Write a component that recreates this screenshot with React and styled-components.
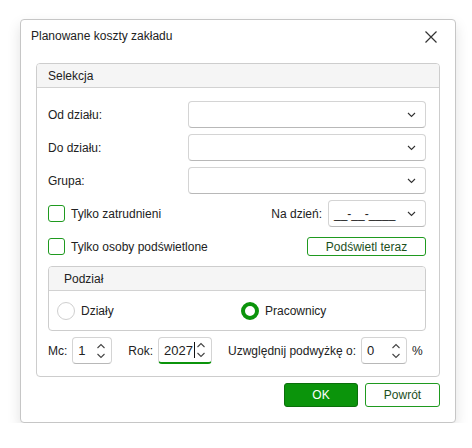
import React from "react";
import styled, { createGlobalStyle } from "styled-components";

const GlobalStyle = createGlobalStyle`
  html, body { margin: 0; padding: 0; background: #ffffff; }
  body { font-family: "Liberation Sans", Arial, sans-serif; font-size: 12px; color: #222; }
  * { box-sizing: border-box; }
`;

const green = "#0b940b";
const greenBorder = "#1f9a1f";
const darkGreenText = "#1c4f1c";

const Page = styled.div`
  padding: 19px 0 0 20px;
`;

const Dialog = styled.div`
  width: 436px;
  border: 1px solid #c6c6c6;
  border-radius: 4px;
  background: #fff;
  box-shadow: 0 6px 14px rgba(0, 0, 0, 0.12);
  padding: 0 15px 15px 15px;
  display: flex;
  flex-direction: column;
`;

const TitleBar = styled.div`
  height: 31px;
  display: flex;
  align-items: center;
  justify-content: space-between;
  margin: 0 -15px 0 -5px;
  padding-right: 17px;
`;

const Title = styled.span`
  font-size: 12px;
  color: #222;
`;

const CloseButton = styled.button`
  border: none;
  background: transparent;
  padding: 0;
  width: 14px;
  height: 14px;
  display: flex;
  align-items: center;
  justify-content: center;
  margin-top: 2px;
`;

const Group = styled.div`
  border: 1px solid #cdcdcd;
  border-radius: 4px;
  margin-top: ${(p) => p.$mt || 0}px;
  overflow: hidden;
`;

const GroupHeader = styled.div`
  height: 24px;
  background: #f5f5f5;
  border-bottom: 1px solid #d2d2d2;
  display: flex;
  align-items: center;
  padding-left: ${(p) => p.$pl || 11}px;
  color: #222;
`;

const SelekcjaBody = styled.div`
  padding: 13px 13px 12px 11px;
  display: flex;
  flex-direction: column;
`;

const FieldRow = styled.div`
  display: grid;
  grid-template-columns: 140px 1fr;
  align-items: center;
  height: 27px;
  margin-bottom: 6px;
`;

const Label = styled.span`
  color: #222;
  white-space: nowrap;
`;

const SelectBox = styled.div`
  height: 27px;
  width: ${(p) => (p.$w ? `${p.$w}px` : "auto")};
  border: 1px solid #d4d4d4;
  border-bottom-color: #b8b8b8;
  border-radius: 4px;
  background: #fff;
  display: flex;
  align-items: center;
  justify-content: space-between;
  padding: 0 9px 0 5px;
  color: #222;
`;

const CheckRow = styled.div`
  display: flex;
  align-items: center;
  justify-content: space-between;
  height: ${(p) => p.$h}px;
  margin-bottom: ${(p) => p.$mb || 0}px;
`;

const CheckLabel = styled.label`
  display: flex;
  align-items: center;
  gap: 6px;
`;

const CheckBox = styled.span`
  width: 17px;
  height: 17px;
  border: 1px solid ${greenBorder};
  border-radius: 3px;
  background: #fff;
  display: inline-block;
`;

const DateField = styled.div`
  display: flex;
  align-items: center;
  gap: 6px;
`;

const OutlineButton = styled.button`
  font-family: inherit;
  font-size: 12px;
  width: ${(p) => p.$w}px;
  height: ${(p) => p.$h}px;
  border: 1px solid ${greenBorder};
  border-radius: 3px;
  background: #fff;
  color: ${darkGreenText};
  padding: 0;
  display: flex;
  align-items: center;
  justify-content: center;
`;

const PrimaryButton = styled.button`
  font-family: inherit;
  font-size: 12px;
  width: 74px;
  height: 24px;
  border: 1px solid #0a6f0a;
  border-radius: 3px;
  background: ${green};
  color: #fff;
  padding: 0;
`;

const RadioRow = styled.div`
  display: grid;
  grid-template-columns: 1fr 1fr;
  height: 39px;
  align-items: center;
  padding-left: 8px;
`;

const RadioLabel = styled.label`
  display: flex;
  align-items: center;
  gap: 6px;
`;

const RadioCircle = styled.span`
  width: 18px;
  height: 18px;
  border-radius: 50%;
  border: ${(p) => (p.$checked ? `4px solid ${green}` : "1px solid #cfcfcf")};
  background: #fff;
  display: inline-block;
`;

const NumbersRow = styled.div`
  display: flex;
  align-items: center;
  height: 27px;
  margin-top: 6px;
`;

const NumField = styled.div`
  display: flex;
  align-items: center;
  gap: 5px;
  margin-right: ${(p) => p.$mr || 0}px;
`;

const SpinBox = styled.div`
  width: ${(p) => p.$w}px;
  height: 27px;
  border: 1px solid #d4d4d4;
  border-bottom: ${(p) => (p.$focused ? `2px solid ${green}` : "1px solid #b8b8b8")};
  border-radius: 4px;
  background: #fff;
  display: flex;
  align-items: center;
  justify-content: space-between;
  padding: 0 5px 0 5px;
  color: #222;
  font-size: 13px;
`;

const SpinValue = styled.span`
  display: flex;
  align-items: center;
`;

const Caret = styled.span`
  display: inline-block;
  width: 1px;
  height: 16px;
  background: #111;
  margin-left: 1px;
`;

const Footer = styled.div`
  display: flex;
  justify-content: flex-end;
  gap: 7px;
  margin-top: 6px;
`;

const Chevron = () => (
  <svg width="9" height="6" viewBox="0 0 9 6" fill="none">
    <path d="M1 1 L4.5 4.5 L8 1" stroke="#333" strokeWidth="1.1" />
  </svg>
);

const Spinner = () => (
  <svg width="10" height="18" viewBox="0 0 10 18" fill="none">
    <path d="M1.5 6 L5 2.5 L8.5 6" stroke="#444" strokeWidth="1.1" />
    <path d="M1.5 12 L5 15.5 L8.5 12" stroke="#444" strokeWidth="1.1" />
  </svg>
);

const CloseIcon = () => (
  <svg width="12" height="12" viewBox="0 0 12 12" fill="none">
    <path d="M0.5 0.5 L11.5 11.5 M11.5 0.5 L0.5 11.5" stroke="#333" strokeWidth="1.2" />
  </svg>
);

export default function App() {
  return (
    <>
      <GlobalStyle />
      <Page>
        <Dialog>
          <TitleBar>
            <Title>Planowane koszty zakładu</Title>
            <CloseButton aria-label="Zamknij">
              <CloseIcon />
            </CloseButton>
          </TitleBar>

          <Group $mt={12}>
            <GroupHeader>Selekcja</GroupHeader>
            <SelekcjaBody>
              <FieldRow>
                <Label>Od działu:</Label>
                <SelectBox>
                  <span />
                  <Chevron />
                </SelectBox>
              </FieldRow>
              <FieldRow>
                <Label>Do działu:</Label>
                <SelectBox>
                  <span />
                  <Chevron />
                </SelectBox>
              </FieldRow>
              <FieldRow>
                <Label>Grupa:</Label>
                <SelectBox>
                  <span />
                  <Chevron />
                </SelectBox>
              </FieldRow>

              <CheckRow $h={27} $mb={6}>
                <CheckLabel>
                  <CheckBox />
                  Tylko zatrudnieni
                </CheckLabel>
                <DateField>
                  <Label>Na dzień:</Label>
                  <SelectBox $w={98}>
                    <span>__-__-____</span>
                    <Chevron />
                  </SelectBox>
                </DateField>
              </CheckRow>

              <CheckRow $h={27}>
                <CheckLabel>
                  <CheckBox />
                  Tylko osoby podświetlone
                </CheckLabel>
                <OutlineButton $w={119} $h={19}>Podświetl teraz</OutlineButton>
              </CheckRow>

              <Group $mt={6}>
                <GroupHeader $pl={15}>Podział</GroupHeader>
                <RadioRow>
                  <RadioLabel>
                    <RadioCircle />
                    Działy
                  </RadioLabel>
                  <RadioLabel>
                    <RadioCircle $checked />
                    Pracownicy
                  </RadioLabel>
                </RadioRow>
              </Group>

              <NumbersRow>
                <NumField $mr={16}>
                  <Label>Mc:</Label>
                  <SpinBox $w={40}>
                    <SpinValue>1</SpinValue>
                    <Spinner />
                  </SpinBox>
                </NumField>
                <NumField $mr={16}>
                  <Label>Rok:</Label>
                  <SpinBox $w={54} $focused>
                    <SpinValue>
                      2027
                      <Caret />
                    </SpinValue>
                    <Spinner />
                  </SpinBox>
                </NumField>
                <NumField>
                  <Label>Uzwględnij podwyżkę o:</Label>
                  <SpinBox $w={46}>
                    <SpinValue>0</SpinValue>
                    <Spinner />
                  </SpinBox>
                  <Label>%</Label>
                </NumField>
              </NumbersRow>
            </SelekcjaBody>
          </Group>

          <Footer>
            <PrimaryButton>OK</PrimaryButton>
            <OutlineButton $w={75} $h={24}>Powrót</OutlineButton>
          </Footer>
        </Dialog>
      </Page>
    </>
  );
}
